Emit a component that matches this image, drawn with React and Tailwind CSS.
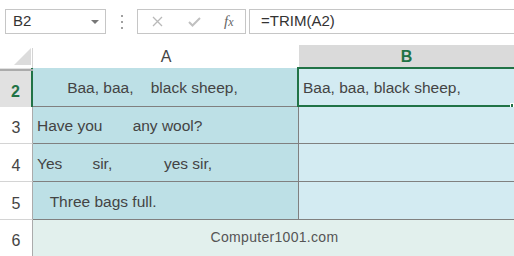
import React from 'react';

const font = { fontFamily: '"Liberation Sans", Arial, sans-serif' };

function Toolbar() {
  return (
    <div className="flex h-[43px] items-start pt-[9px] pl-[5px] bg-white">
      {/* Name box */}
      <div className="flex h-[25px] w-[101px] items-center justify-between border border-[#c6c6c6] pl-[7px] pr-[6px] text-[15px] text-[#333]">
        <span>B2</span>
        <span className="h-0 w-0 border-x-[4px] border-t-[4px] border-x-transparent border-t-[#777]" />
      </div>
      {/* Grip dots */}
      <div className="ml-[15px] mt-[6px] flex w-[2px] flex-col gap-[4px]">
        <span className="h-[2px] w-[2px] bg-[#a0a0a0]" />
        <span className="h-[2px] w-[2px] bg-[#a0a0a0]" />
        <span className="h-[2px] w-[2px] bg-[#a0a0a0]" />
      </div>
      {/* Formula buttons */}
      <div className="ml-[14px] flex h-[25px] w-[109px] items-center border border-[#c6c6c6]">
        <svg className="ml-[14px]" width="11" height="11" viewBox="0 0 11 11">
          <path d="M1 1L10 10M10 1L1 10" stroke="#b9b9b9" strokeWidth="1.3" fill="none" />
        </svg>
        <svg className="ml-[25px]" width="13" height="10" viewBox="0 0 13 10">
          <path d="M1 5L4.5 8.5L12 1" stroke="#c0c0c0" strokeWidth="2" fill="none" />
        </svg>
        <span
          className="ml-[23px] text-[15px] italic text-[#666]"
          style={{ fontFamily: '"Liberation Serif", "Times New Roman", serif' }}
        >
          f<span className="text-[12px]">x</span>
        </span>
      </div>
      {/* Formula bar */}
      <div className="ml-[3px] flex h-[25px] flex-1 items-center border border-r-0 border-[#c6c6c6] pl-[11px] text-[15px] text-[#333]">
        =TRIM(A2)
      </div>
    </div>
  );
}

function HeaderRow() {
  return (
    <div className="grid h-[25px] grid-cols-[33px_266px_215px]">
      <div className="relative border-b-2 border-[#ababab]">
        <svg className="absolute left-[14px] top-[5px]" width="17" height="17" viewBox="0 0 17 17">
          <path d="M17 0L17 17L0 17Z" fill="#dcdcdc" />
        </svg>
        <div className="absolute right-0 top-[5px] h-[20px] w-px bg-[#d4d4d4]" />
      </div>
      <div className="flex items-center justify-center border-b-2 border-[#ababab] pt-[2px] text-[16px] text-[#444]">
        A
      </div>
      <div className="mt-[2px] flex items-center justify-center border-b-2 border-[#217346] bg-[#dadada] text-[16px] font-bold text-[#217346]">
        B
      </div>
    </div>
  );
}

const rows = [
  { n: '2', h: 'h-[39px]', a: '       Baa, baa,    black sheep,', b: 'Baa, baa, black sheep,', active: true },
  { n: '3', h: 'h-[37px]', a: 'Have you       any wool?' },
  { n: '4', h: 'h-[38px]', a: 'Yes       sir,            yes sir,' },
  { n: '5', h: 'h-[38px]', a: '   Three bags full.' },
];

function Row({ row }) {
  return (
    <div className={`grid grid-cols-[33px_266px_215px] ${row.h}`}>
      <div
        className={`flex items-end justify-center pb-[3px] text-[16px] ${
          row.active
            ? 'border-r-2 border-r-[#217346] bg-[#e1e1e1] font-bold text-[#217346]'
            : 'border-r border-r-[#ababab] border-b border-b-[#d4d4d4] text-[#444]'
        }`}
      >
        {row.n}
      </div>
      <div className="flex items-center whitespace-pre border-b border-r border-[#808080] bg-[#bde0e6] pl-[4px] pt-[2px] text-[15.5px] text-[#444]">
        {row.a}
      </div>
      <div className="relative flex items-center whitespace-pre border-b border-[#808080] bg-[#d3ebf2] pl-[4px] pt-[2px] text-[15.5px] text-[#444]">
        {row.b}
        {row.active && (
          <>
            <div className="absolute -left-[2px] -top-[1px] -bottom-[1px] -right-[4px] border-2 border-[#217346]" />
            <div className="absolute -bottom-[3px] right-0 h-[6px] w-[4px] border border-white bg-[#217346]" />
          </>
        )}
      </div>
    </div>
  );
}

export default function App() {
  return (
    <div className="h-[256px] w-[514px] overflow-hidden bg-white" style={font}>
      <Toolbar />
      <HeaderRow />
      {rows.map((r) => (
        <Row key={r.n} row={r} />
      ))}
      <div className="grid h-[36px] grid-cols-[33px_481px]">
        <div className="flex items-end justify-center border-r border-[#ababab] pb-[3px] text-[16px] text-[#444]">
          6
        </div>
        <div className="flex items-center justify-center bg-[#e2f0ed] pl-[2px] pb-[2px] text-[14px] tracking-[0.3px] text-[#555]">
          Computer1001.com
        </div>
      </div>
    </div>
  );
}
